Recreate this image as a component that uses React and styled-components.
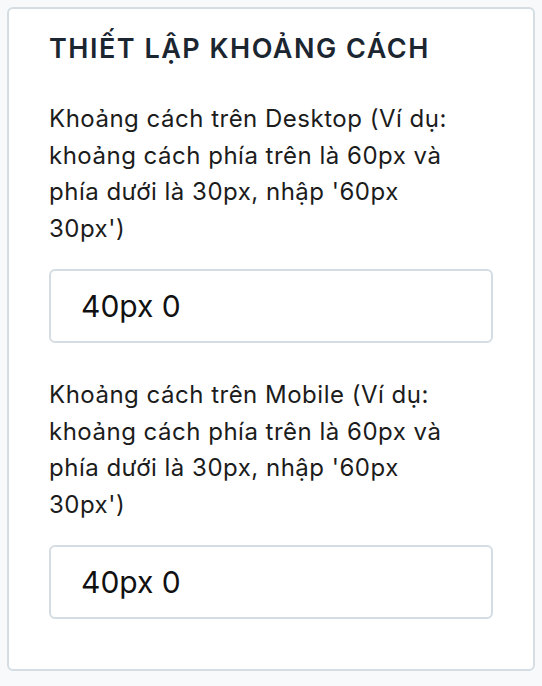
import React from "react";
import styled, { createGlobalStyle } from "styled-components";

const Global = createGlobalStyle`
  html, body { margin: 0; padding: 0; background: #f7f9fb; }
  body { font-family: Inter, "Noto Sans", "Liberation Sans", sans-serif; }
  * { box-sizing: border-box; }
`;

const Page = styled.div`
  padding: 7px;
`;

const Card = styled.section`
  background: #ffffff;
  border: 2px solid #d3dde3;
  border-radius: 6px;
  padding: 22px 40px 50px;
  display: flex;
  flex-direction: column;
`;

const Title = styled.h2`
  margin: 0 0 34px;
  font-size: 27px;
  line-height: 36px;
  font-weight: 600;
  letter-spacing: 1.5px;
  color: #1b2631;
`;

const Field = styled.div`
  display: flex;
  flex-direction: column;
  gap: 22px;
  & + & {
    margin-top: 34px;
  }
`;

const Label = styled.label`
  padding-right: 20px;
  font-size: 24px;
  line-height: 36.5px;
  letter-spacing: 0.5px;
  color: #1c1c1c;
`;

const Input = styled.input`
  width: 100%;
  height: 74px;
  border: 2px solid #d3dde3;
  border-radius: 6px;
  padding: 0 0 0 30px;
  font-family: inherit;
  font-size: 30px;
  color: #111;
  background: #fff;
  outline: none;
`;

const fields = [
  { id: "desktop", label: "Khoảng cách trên Desktop (Ví dụ: khoảng cách phía trên là 60px và phía dưới là 30px, nhập '60px 30px')", value: "40px 0" },
  { id: "mobile", label: "Khoảng cách trên Mobile (Ví dụ: khoảng cách phía trên là 60px và phía dưới là 30px, nhập '60px 30px')", value: "40px 0" },
];

export default function App() {
  return (
    <Page>
      <Global />
      <Card>
        <Title>THIẾT LẬP KHOẢNG CÁCH</Title>
        {fields.map((f) => (
          <Field key={f.id}>
            <Label htmlFor={f.id}>{f.label}</Label>
            <Input id={f.id} defaultValue={f.value} />
          </Field>
        ))}
      </Card>
    </Page>
  );
}
